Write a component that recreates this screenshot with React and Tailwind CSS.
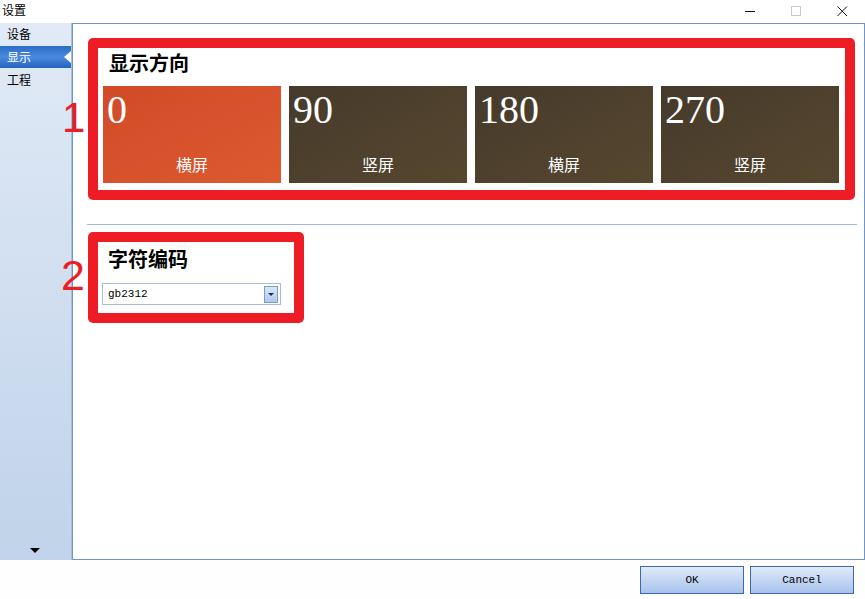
import React from "react";

const CJK = "font-['Noto_Sans_CJK_SC','Noto_Sans',sans-serif]";
const SERIF = "font-['Liberation_Serif','Noto_Sans_CJK_SC',serif]";
const MONO = "font-['Liberation_Mono','Noto_Sans_CJK_SC',monospace]";

const TILES = [
  { deg: "0", label: "横屏", active: true },
  { deg: "90", label: "竖屏" },
  { deg: "180", label: "横屏" },
  { deg: "270", label: "竖屏" },
];

function TitleBar() {
  return (
    <div className="flex h-[23px] items-center justify-between bg-white pb-[3px]">
      <span className={`${CJK} pl-[2px] text-[12px] leading-none text-black`}>设置</span>
      <div className="flex items-center pt-[2px]">
        <div className="flex h-[20px] w-[45px] items-center justify-center">
          <svg width="11" height="11" viewBox="0 0 11 11">
            <path d="M0 5.5H10" stroke="#111" strokeWidth="1" />
          </svg>
        </div>
        <div className="flex h-[20px] w-[46px] items-center justify-center">
          <svg width="11" height="11" viewBox="0 0 11 11">
            <rect x="0.5" y="0.5" width="9" height="9" fill="none" stroke="#c8c8c8" />
          </svg>
        </div>
        <div className="flex h-[20px] w-[46px] items-center justify-center">
          <svg width="11" height="11" viewBox="0 0 11 11">
            <path d="M0.5 0.5L10 10M10 0.5L0.5 10" stroke="#111" strokeWidth="1" />
          </svg>
        </div>
      </div>
    </div>
  );
}

function Sidebar() {
  return (
    <div className="relative flex w-[72px] shrink-0 flex-col border-r border-[#a9bedb] bg-gradient-to-b from-[#e1eaf6] to-[#c0d3ea]">
      <div className={`${CJK} flex h-[23px] items-center pb-[2px] pl-[7px] text-[12px] text-black`}>设备</div>
      <div
        className={`${CJK} relative flex h-[22px] items-center bg-gradient-to-b from-[#2a6cc4] via-[#4a8be0] to-[#2462bc] pl-[7px] text-[12px] text-white`}
      >
        显示
        <span className="absolute right-0 top-[5px] h-0 w-0 border-y-[6px] border-r-[7px] border-y-transparent border-r-white" />
      </div>
      <div className={`${CJK} flex h-[23px] items-center pl-[7px] text-[12px] text-black`}>工程</div>
      <div className="flex-1" />
      <div className="flex justify-center pb-[7px] pr-[1px]">
        <span className="h-0 w-0 border-x-[5px] border-t-[5px] border-x-transparent border-t-black" />
      </div>
    </div>
  );
}

function Tile({ deg, label, active }) {
  return (
    <div
      className={`flex h-[97px] w-[178px] shrink-0 flex-col justify-between ${
        active
          ? "bg-gradient-to-br from-[#d24a28] to-[#dc5a30]"
          : "bg-gradient-to-br from-[#463a2b] to-[#56472f]"
      }`}
    >
      <div className={`${SERIF} pl-[4px] pt-[4px] text-[40px] leading-[40px] text-white`}>{deg}</div>
      <div className={`${CJK} pb-[8px] text-center text-[16px] leading-[22px] text-white`}>{label}</div>
    </div>
  );
}

function Select() {
  return (
    <div className="flex h-[22px] w-[179px] items-center justify-between border border-[#a8bcd8] bg-white">
      <span className={`${MONO} pl-[5px] text-[11px] text-black`}>gb2312</span>
      <div className="mr-[2px] flex h-[17px] w-[14px] items-center justify-center border border-[#7d9bc8] bg-gradient-to-b from-[#dae6f7] to-[#afc8ec]">
        <span className="h-0 w-0 border-x-[3px] border-t-[3px] border-x-transparent border-t-[#1d2f4f]" />
      </div>
    </div>
  );
}

function Panel() {
  return (
    <div className="relative flex min-w-0 flex-1 flex-col border border-[#6d95cf] bg-white pl-[15px] pr-[8px] pt-[14px]">
      <div className="h-[162px] w-[767px] shrink-0 rounded-[5px] border-[10px] border-[#ee1c24]">
        <div className={`${CJK} flex h-[30px] items-center pl-[11px] text-[20px] font-bold leading-none text-black`}>
          显示方向
        </div>
        <div className="mt-[8px] flex gap-[8px] pl-[5px]">
          {TILES.map((t) => (
            <Tile key={t.deg} {...t} />
          ))}
        </div>
      </div>

      <div className="-ml-[1px] mt-[24px] h-px w-[770px] bg-[#9db9dc]" />

      <div className="mt-[7px] h-[91px] w-[216px] rounded-[5px] border-[10px] border-[#ee1c24]">
        <div className={`${CJK} flex h-[33px] items-center pl-[10px] text-[20px] font-bold leading-none text-black`}>
          字符编码
        </div>
        <div className="mt-[8px] pl-[4px]">
          <Select />
        </div>
      </div>
    </div>
  );
}

function Button({ children }) {
  return (
    <button className={`${MONO} flex h-[28px] w-[104px] items-center justify-center border border-[#3e68a8] bg-gradient-to-b from-[#e0ebf9] to-[#a7c2eb] text-[11px] text-black`}>
      {children}
    </button>
  );
}

export default function App() {
  return (
    <div className="relative flex h-[599px] w-[865px] flex-col overflow-hidden bg-white">
      <TitleBar />
      <div className="flex h-[537px]">
        <Sidebar />
        <Panel />
      </div>
      <div className="flex flex-1 justify-end gap-[6px] bg-[#fefefe] pr-[11px] pt-[6px]">
        <Button>OK</Button>
        <Button>Cancel</Button>
      </div>

      <span className="absolute left-[62px] top-[97px] font-['Liberation_Sans',sans-serif] text-[42px] font-light leading-none text-[#ee1c24]">
        1
      </span>
      <span className="absolute left-[61px] top-[254px] font-['Liberation_Sans',sans-serif] text-[43px] leading-none text-[#ee1c24]">
        2
      </span>
    </div>
  );
}
